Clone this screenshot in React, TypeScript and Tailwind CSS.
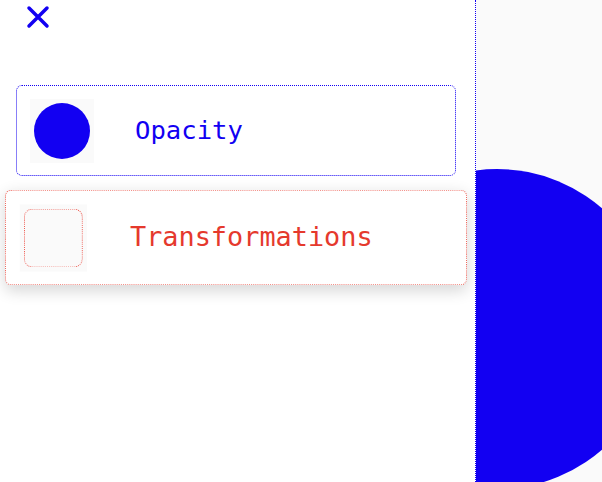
import React from 'react';

const BLUE = '#1200f2';

interface DemoCardProps {
  label: string;
  active?: boolean;
  kind: 'opacity' | 'transform';
}

const DemoCard: React.FC<DemoCardProps> = ({ label, active, kind }) => {
  const isOpacity = kind === 'opacity';
  return (
    <div
      className={
        isOpacity
          ? 'flex items-center w-[440px] h-[91px] px-[13px] rounded-md border border-dotted border-[#1200f2] bg-white'
          : 'flex items-center w-[440px] h-[91px] px-[13px] rounded-md border border-dotted border-[#ee6a60] bg-white shadow-[0_5px_14px_rgba(0,0,0,0.16)] scale-[1.05]'
      }
    >
      <div className="w-16 h-16 bg-[#fafafa] flex items-center justify-center shrink-0">
        {isOpacity ? (
          <div className="w-14 h-14 rounded-full bg-[#1200f2]" />
        ) : (
          <div className="w-14 h-14 rounded-lg border border-dotted border-[#ee5a50] bg-[#fafafa]" />
        )}
      </div>
      <span
        className={
          active
            ? 'ml-[41px] text-[25.6px] leading-none text-[#e5392d] font-["DejaVu_Sans_Mono",monospace]'
            : 'ml-[41px] text-[25.6px] leading-none text-[#1200f2] font-["DejaVu_Sans_Mono",monospace]'
        }
      >
        {label}
      </span>
    </div>
  );
};

export default function App() {
  return (
    <div className="flex w-[602px] h-[482px] overflow-hidden bg-white">
      <div className="w-[476px] h-full shrink-0 border-r border-dotted border-[#1200f2] flex flex-col">
        <button className="ml-[26px] mt-[5px] w-6 h-6 flex items-center justify-center">
          <svg width="24" height="24" viewBox="0 0 24 24">
            <path d="M3 3 L21 21 M21 3 L3 21" stroke={BLUE} strokeWidth="3.5" strokeLinecap="round" fill="none" />
          </svg>
        </button>
        <div className="mt-[56px] ml-4 flex flex-col gap-4">
          <DemoCard label="Opacity" kind="opacity" />
          <DemoCard label="Transformations" kind="transform" active />
        </div>
      </div>
      <div className="relative flex-1 h-full bg-[#fafafa] overflow-hidden">
        <div className="absolute left-[-139px] top-[169px] w-[320px] h-[320px] rounded-full bg-[#1200f2]" />
      </div>
    </div>
  );
}
